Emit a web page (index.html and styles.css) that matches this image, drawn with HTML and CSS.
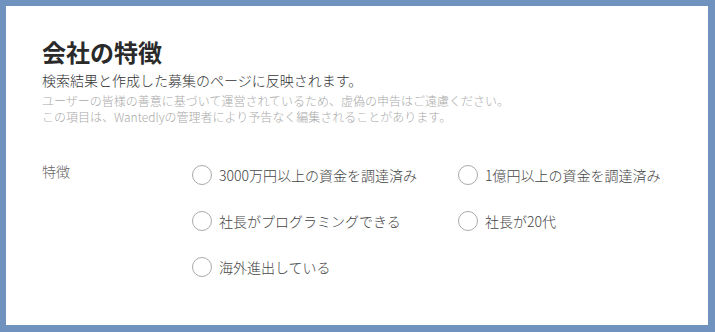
FILE: index.html
```html
<!DOCTYPE html>
<html lang="ja">
<head>
<meta charset="utf-8">
<link rel="stylesheet" href="styles.css">
</head>
<body>
<div class="card">
  <h1 class="title">会社の特徴</h1>
  <p class="lead">検索結果と作成した募集のページに反映されます。</p>
  <p class="note">ユーザーの皆様の善意に基づいて運営されているため、虚偽の申告はご遠慮ください。<br>この項目は、Wantedlyの管理者により予告なく編集されることがあります。</p>
  <div class="field">
    <div class="field-label">特徴</div>
    <div class="options">
      <label class="option"><span class="radio"></span><span class="option-text">3000万円以上の資金を調達済み</span></label>
      <label class="option"><span class="radio"></span><span class="option-text">1億円以上の資金を調達済み</span></label>
      <label class="option"><span class="radio"></span><span class="option-text">社長がプログラミングできる</span></label>
      <label class="option"><span class="radio"></span><span class="option-text">社長が20代</span></label>
      <label class="option"><span class="radio"></span><span class="option-text">海外進出している</span></label>
    </div>
  </div>
</div>
</body>
</html>
```
FILE: styles.css
```css
html, body {
  margin: 0;
  padding: 0;
}
body {
  background: #7092bf;
  width: 715px;
  height: 332px;
  box-sizing: border-box;
  padding: 6px 7px 7px 6px;
  font-family: "Noto Sans CJK JP", "Noto Sans", sans-serif;
  font-weight: 300;
  color: #333;
}
.card {
  background: #fff;
  height: 319px;
  box-sizing: border-box;
  padding: 29px 36px 0 36px;
}
.title {
  margin: 0;
  font-size: 24px;
  line-height: 34px;
  font-weight: bold;
  color: #2a2a2a;
}
.lead {
  margin: 1px 0 0;
  font-size: 14px;
  line-height: 20px;
  color: #333;
}
.note {
  margin: 3px 0 0;
  font-size: 12px;
  line-height: 16px;
  color: #aaa;
}
.field {
  display: flex;
  margin-top: 37px;
}
.field-label {
  width: 150px;
  flex: none;
  font-size: 14px;
  line-height: 18px;
  color: #666;
}
.options {
  display: grid;
  grid-template-columns: 266px 266px;
  grid-auto-rows: 26px;
  row-gap: 20px;
}
.option {
  display: flex;
  align-items: center;
  font-size: 14px;
  color: #444;
}
.radio {
  width: 18px;
  height: 18px;
  border: 1px solid #aaa;
  border-radius: 50%;
  margin-right: 7px;
  flex: none;
}
```
